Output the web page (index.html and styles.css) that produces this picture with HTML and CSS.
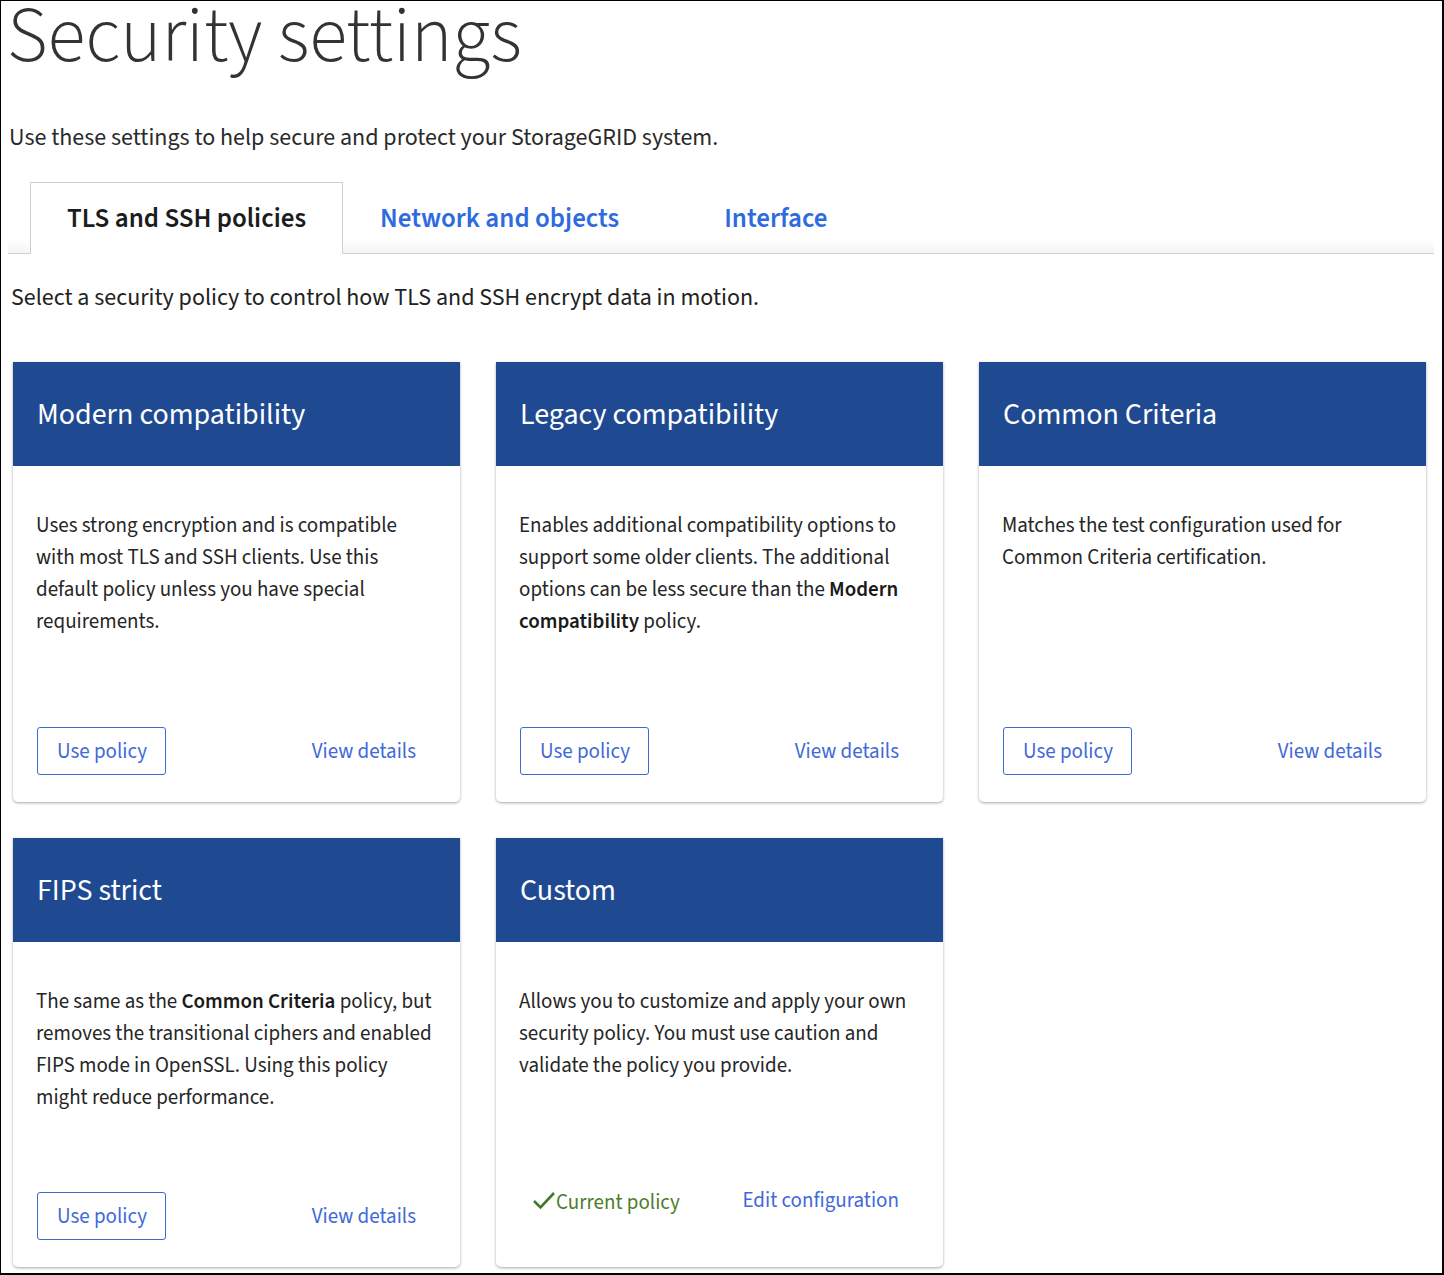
FILE: index.html
```html
<!DOCTYPE html>
<html lang="en">
<head>
<meta charset="utf-8">
<title>Security settings</title>
<link rel="stylesheet" href="styles.css">
</head>
<body>
<div class="frame">
  <main class="page">
    <h1 class="title">Security settings</h1>
    <p class="subtitle">Use these settings to help secure and protect your StorageGRID system.</p>

    <nav class="tabs">
      <a class="tab tab-active">TLS and SSH policies</a>
      <a class="tab">Network and objects</a>
      <a class="tab tab-last">Interface</a>
    </nav>

    <p class="intro">Select a security policy to control how TLS and SSH encrypt data in motion.</p>

    <section class="cards">
      <article class="card">
        <header class="card-head">Modern compatibility</header>
        <div class="card-body">Uses strong encryption and is compatible with most TLS and SSH clients. Use this default policy unless you have special requirements.</div>
        <footer class="card-foot">
          <button class="btn">Use policy</button>
          <a class="link">View details</a>
        </footer>
      </article>

      <article class="card">
        <header class="card-head">Legacy compatibility</header>
        <div class="card-body">Enables additional compatibility options to support some older clients. The additional options can be less secure than the <b>Modern compatibility</b> policy.</div>
        <footer class="card-foot">
          <button class="btn">Use policy</button>
          <a class="link">View details</a>
        </footer>
      </article>

      <article class="card">
        <header class="card-head">Common Criteria</header>
        <div class="card-body">Matches the test configuration used for Common Criteria certification.</div>
        <footer class="card-foot">
          <button class="btn">Use policy</button>
          <a class="link">View details</a>
        </footer>
      </article>

      <article class="card">
        <header class="card-head">FIPS strict</header>
        <div class="card-body">The same as the <b>Common Criteria</b> policy, but removes the transitional ciphers and enabled FIPS mode in OpenSSL. Using this policy might reduce performance.</div>
        <footer class="card-foot">
          <button class="btn">Use policy</button>
          <a class="link">View details</a>
        </footer>
      </article>

      <article class="card">
        <header class="card-head">Custom</header>
        <div class="card-body">Allows you to customize and apply your own security policy. You must use caution and validate the policy you provide.</div>
        <footer class="card-foot card-foot-current">
          <span class="current"><svg class="check" viewBox="0 0 24 20" width="24" height="20"><path d="M2 11 L8.5 17.5 L22 3" fill="none" stroke="#3f7a2a" stroke-width="2.6"/></svg>Current policy</span>
          <a class="link">Edit configuration</a>
        </footer>
      </article>
    </section>
  </main>
</div>
</body>
</html>
```

FILE: styles.css
```css
* { box-sizing: border-box; }

html, body {
  margin: 0;
  padding: 0;
  background: #fff;
}

body {
  font-family: "Source Sans Pro", "Source Sans 3", Lato, "Liberation Sans", sans-serif;
  color: #222;
}

.frame {
  width: 1444px;
  height: 1275px;
  border-top: 1px solid #000;
  border-left: 1px solid #000;
  border-right: 2px solid #000;
  border-bottom: 2px solid #000;
  overflow: hidden;
}

.page {
  padding: 0 8px 0 7px;
}

.title {
  margin: -6px 0 0 -1px;
  font-size: 78px;
  font-weight: 300;
  line-height: 84px;
  color: #333;
  letter-spacing: -0.05px;
}

.subtitle {
  margin: 45px 0 0 1px;
  font-size: 24px;
  line-height: 28px;
  color: #2a2a2a;
}

.tabs {
  display: flex;
  margin-top: 30px;
  height: 72px;
  border-bottom: 1px solid #d2d2d2;
  background: linear-gradient(to bottom, #fff 0, #fff 80%, #f4f4f4 100%);
  padding-left: 22px;
}

.tab {
  display: flex;
  align-items: center;
  padding: 0 36px;
  font-size: 27px;
  font-weight: 600;
  color: #2f6be0;
  border: 1px solid transparent;
  border-bottom: none;
  margin-bottom: -1px;
  height: 72px;
}

.tab-active {
  color: #1c1c1c;
  background: #fff;
  border-color: #cfcfcf;
}

.tab-last {
  margin-left: 31px;
}

.intro {
  margin: 30px 0 0 3px;
  font-size: 24px;
  line-height: 28px;
  color: #222;
}

.cards {
  display: grid;
  grid-template-columns: repeat(3, 447px);
  grid-template-rows: 440px 429px;
  column-gap: 36px;
  row-gap: 36px;
  margin: 50px 0 0 5px;
}

.card {
  display: flex;
  flex-direction: column;
  background: #fff;
  border-radius: 0 0 5px 5px;
  box-shadow: 0 1px 3px rgba(0, 0, 0, 0.35);
}

.card-head {
  height: 104px;
  display: flex;
  align-items: center;
  padding-left: 24px;
  background: #1f4a92;
  color: #fff;
  font-size: 30px;
  font-weight: 400;
}

.card-body {
  padding: 43px 24px 0 23px;
  font-size: 21px;
  line-height: 32px;
  color: #262626;
}

.card-body b {
  font-weight: 600;
  color: #1a1a1a;
}

.card-foot {
  margin-top: auto;
  display: flex;
  align-items: center;
  justify-content: space-between;
  padding: 0 44px 27px 24px;
}

.btn {
  height: 48px;
  padding: 0 18px 0 19px;
  border: 1px solid #3a6cd0;
  border-radius: 3px;
  background: #fff;
  color: #4169d8;
  font-family: inherit;
  font-size: 21px;
}

.link {
  font-size: 21px;
  color: #4169d8;
}

.card-foot-current {
  padding-left: 36px;
  padding-bottom: 50px;
}

.current {
  display: flex;
  align-items: center;
  font-size: 21px;
  color: #4e7d2a;
  margin-top: 4px;
}

.check {
  margin-right: 0;
  margin-top: -5px;
}
```
